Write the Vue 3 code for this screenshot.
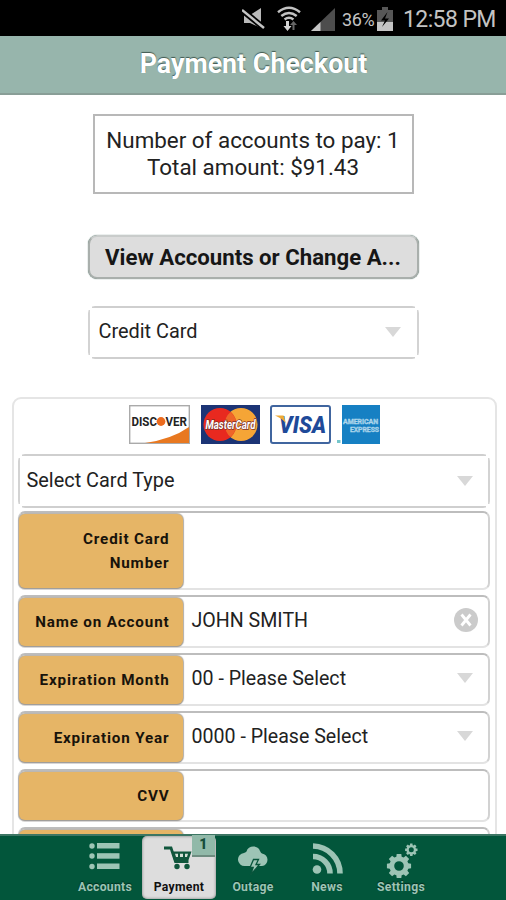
<script setup>
const fields = [
  { label: 'Credit Card Number', value: '', tall: true },
  { label: 'Name on Account', value: 'JOHN SMITH', control: 'clear' },
  { label: 'Expiration Month', value: '00 - Please Select', control: 'arrow' },
  { label: 'Expiration Year', value: '0000 - Please Select', control: 'arrow' },
  { label: 'CVV', value: '' },
  { label: '', value: '' },
]

// Closed outline of a toothed wheel centred on (cx, cy), with a round hole.
function gear(cx, cy, outer, inner, hole) {
  const pts = []
  for (let i = 0; i < 8; i++) {
    const base = (i * Math.PI) / 4
    for (const [offset, r] of [[-0.28, inner], [-0.19, outer], [0.19, outer], [0.28, inner]]) {
      pts.push(`${(cx + r * Math.cos(base + offset)).toFixed(2)} ${(cy + r * Math.sin(base + offset)).toFixed(2)}`)
    }
  }
  return `M${pts.join('L')}ZM${cx - hole} ${cy}a${hole} ${hole} 0 1 0 ${hole * 2} 0a${hole} ${hole} 0 1 0 ${-hole * 2} 0Z`
}
const bigGear = gear(15, 24, 12.3, 9.6, 4.8)
const smallGear = gear(27.3, 7.8, 6.3, 4.8, 2.5)
</script>

<template>
  <div class="screen">
    <div class="status">
      <svg class="mute" viewBox="0 0 24 22" width="24" height="22">
        <path d="M2 7h6l11-7v20L8 15H2z" fill="#b9b9b9" />
        <path d="M0 2l22 18" stroke="#000" stroke-width="6" />
        <path d="M0 2l22 18" stroke="#c4c4c4" stroke-width="2.500" />
      </svg>
      <svg class="wifi" viewBox="0 0 24 26" width="24" height="26">
        <g fill="none" stroke="#c2c2c2" stroke-width="2.500">
          <path d="M1 6.200q11-9 22 0M4.300 10q7.700-6 15.400 0M7.600 13.500q4.400-3.500 8.800 0" />
        </g>
        <path d="M9 15h3v5h2.500l-4 5-4-5H9z" fill="#d5d5d5" />
        <path d="M15.500 24v-5H13l3.500-4 3.500 4h-2.500v5z" fill="#666" />
      </svg>
      <svg class="signal" viewBox="0 0 24 23" width="24" height="23">
        <path d="M0 23L24 0v23z" fill="#4d4d4d" />
        <path d="M0 23l9.500-9v9z" fill="#c6c6c6" />
      </svg>
      <span class="percent">36%</span>
      <svg class="battery" viewBox="0 0 16 24" width="16" height="24">
        <path d="M5 0h6v3h5v21H0V3h5z" fill="#575757" />
        <path d="M0 15h16v9H0z" fill="#c4c4c4" />
        <path d="M10.500 5L4 13.500h4L5 20l7-8.500H8z" fill="#000" />
      </svg>
      <span class="clock">12:58 PM</span>
    </div>
    <header class="title"><span>Payment Checkout</span></header>

    <main class="content">
      <div class="summary">
        <div class="count">Number of accounts to pay: 1</div>
        <div class="total">Total amount: $91.43</div>
      </div>
      <button class="view"><span>View Accounts or Change A...</span></button>
      <div class="select method"><span>Credit Card</span><i class="arrow"></i></div>

      <section class="panel">
        <div class="cards">
          <svg class="discover" viewBox="0 0 61 39" width="61" height="39">
            <rect x=".7" y=".7" width="59.600" height="37.600" fill="#fff" stroke="#aaa" stroke-width="1.400" />
            <path d="M16 38Q43 34 60 22v16z" fill="#e87820" />
            <text x="2.500" y="21" textLength="25.500" lengthAdjust="spacingAndGlyphs">DISC</text>
            <circle cx="32" cy="16.500" r="4.400" fill="#ec6b1e" />
            <text x="36.500" y="21" textLength="21.500" lengthAdjust="spacingAndGlyphs">VER</text>
          </svg>
          <svg class="mastercard" viewBox="0 0 59 39" width="59" height="39">
            <rect width="59" height="39" fill="#1c3475" />
            <circle cx="40" cy="19.500" r="16.500" fill="#f5a536" />
            <circle cx="19" cy="19.500" r="16.500" fill="#e8291f" />
            <path d="M29.500 7a16.500 16.500 0 0 1 0 25a16.500 16.500 0 0 1 0-25z" fill="#ee6528" />
            <text x="4.500" y="24" textLength="50" lengthAdjust="spacingAndGlyphs">MasterCard</text>
          </svg>
          <svg class="visa" viewBox="0 0 61 39" width="61" height="39">
            <rect x="1" y="1" width="59" height="37" rx="2" fill="#fff" stroke="#40659f" stroke-width="2" />
            <text x="9" y="27.500" textLength="47" lengthAdjust="spacingAndGlyphs">VISA</text>
            <path d="M5 10.500h8.500l2.500 8q-3.500-5-11-8z" fill="#eeaa36" />
          </svg>
          <svg class="amex" viewBox="0 0 44 39" width="44" height="39">
            <rect x="6" width="38" height="39" fill="#1680c3" />
            <rect x="1" y="35" width="3.500" height="3" fill="#75c6cb" />
            <text x="7" y="18.500" textLength="35" lengthAdjust="spacingAndGlyphs">AMERICAN</text>
            <text x="14" y="27" textLength="29" lengthAdjust="spacingAndGlyphs">EXPRESS</text>
          </svg>
        </div>
        <div class="select type"><span>Select Card Type</span><i class="arrow"></i></div>
        <div v-for="(f, i) in fields" :key="i" class="field" :class="{ tall: f.tall }">
          <label>{{ f.label }}</label>
          <div class="value">
            <span>{{ f.value }}</span>
            <i v-if="f.control === 'arrow'" class="arrow"></i>
            <svg v-if="f.control === 'clear'" class="clear" viewBox="0 0 24 24" width="24" height="24">
              <circle cx="12" cy="12" r="12" fill="#cbcbcb" />
              <path d="M7.500 6.500l9 11M16.500 6.500l-9 11" stroke="#fff" stroke-width="2.800" />
            </svg>
          </div>
        </div>
      </section>
    </main>

    <nav class="tabs">
      <div class="tab">
        <svg viewBox="0 0 32 28" width="32" height="28" fill="#9dc4b5">
          <circle cx="3" cy="4" r="2.700" /><rect x="8" y="1" width="22.500" height="5.500" />
          <circle cx="3" cy="14" r="2.700" /><rect x="8" y="11.200" width="22.500" height="5.500" />
          <circle cx="3" cy="24.500" r="2.700" /><rect x="8" y="21.500" width="22.500" height="5.500" />
        </svg>
        <span>Accounts</span>
      </div>
      <div class="tab active">
        <svg viewBox="0 0 30 25" width="30" height="25">
          <path d="M1 3h7l4.500 13.500h13" fill="none" stroke="#10563c" stroke-width="2.800" />
          <path d="M8.500 6.500h20l-3 8.500H11z" fill="#10563c" />
          <path d="M12 8.800h3v3.200h-2zM17 8.800h3V12h-3zM22 8.800h3l-1 3.200h-2z" fill="#d3dfd5" />
          <circle cx="14" cy="21.500" r="2.700" fill="#10563c" /><circle cx="24" cy="21.500" r="2.700" fill="#10563c" />
        </svg>
        <span>Payment</span>
        <b class="badge">1</b>
      </div>
      <div class="tab">
        <svg class="storm" viewBox="0 0 30 29" width="30" height="29">
          <path d="M7 20a6.500 6.500 0 0 1-1-13Q8 6 8.500 5.500C10-1 20-1 22 5q1 2 2 2.500a6.300 6.300 0 0 1 0 12.500z" fill="#9dc4b5" />
          <path d="M15.500 13.500h5l-2.500 5h3.500L12.500 29l2.700-7.500H12z" fill="#9dc4b5" stroke="#08543b" stroke-width="1.300" />
        </svg>
        <span>Outage</span>
      </div>
      <div class="tab">
        <svg viewBox="0 0 31 32" width="31" height="32">
          <circle cx="5" cy="27.500" r="4.300" fill="#9dc4b5" />
          <path d="M1 14.500a17 17 0 0 1 17 17M1 4a27.500 27.500 0 0 1 27 27.500" fill="none" stroke="#9dc4b5" stroke-width="5.600" />
        </svg>
        <span>News</span>
      </div>
      <div class="tab">
        <svg viewBox="0 0 34 37" width="34" height="37" fill="#9dc4b5" fill-rule="evenodd">
          <path :d="bigGear" /><path :d="smallGear" />
        </svg>
        <span>Settings</span>
      </div>
    </nav>
  </div>
</template>

<style>
body { margin: 0; background: #fff; }
</style>

<style scoped>
* { box-sizing: border-box; }
.screen { width: 506px; height: 900px; display: flex; flex-direction: column; overflow: hidden; font-family: Roboto, sans-serif; color: #222; white-space: nowrap; }
.status { height: 36px; flex: none; background: #000; color: #c3c3c3; display: flex; align-items: center; justify-content: flex-end; padding: 2px 11px 0 0; }
.mute { margin-right: 11px; }
.wifi { margin-right: 10px; }
.signal { margin-right: 7px; }
.percent { font-size: 18px; width: 35px; letter-spacing: -.4px; }
.battery { margin-right: 10px; }
.clock { font-size: 23px; width: 92px; letter-spacing: -.6px; padding-top: 1px; }
.title { height: 59px; flex: none; background: #97b5ac; border-bottom: 2px solid #899e97; display: flex; justify-content: center; padding: 12px 0 0 1px; color: #fff; font-size: 26.800px; line-height: 32px; font-weight: 700; text-shadow: 0 -1px 1px #405850; }
.content { flex: 1; min-height: 0; overflow: hidden; display: flex; flex-direction: column; align-items: center; }
.summary { flex: none; width: 321px; height: 80px; margin-top: 19px; border: 2px solid #b8b8b8; padding-top: 11px; text-align: center; font-size: 22.400px; line-height: 27px; }
.view { flex: none; width: 331px; height: 44px; margin-top: 41px; padding: 0; border: 2px solid #a9afac; border-top-color: #c9cccb; border-radius: 9px; background: #ddd; box-shadow: 0 0 1px #386053; font: 700 22.200px/38px Roboto, sans-serif; color: #161616; }
.select { flex: none; border-radius: 7px; display: flex; align-items: center; justify-content: space-between; font-size: 19.900px;
  background:
    linear-gradient(#cfcfcf, #cfcfcf) 50% 0 / calc(100% - 8px) 2px no-repeat,
    linear-gradient(#cfcfcf, #cfcfcf) 50% 100% / calc(100% - 8px) 2px no-repeat,
    linear-gradient(#d3d3d3, #d3d3d3) 0 50% / 2px calc(100% - 8px) no-repeat,
    linear-gradient(#d3d3d3, #d3d3d3) 100% 50% / 2px calc(100% - 8px) no-repeat, #fff; }
.method { width: 331px; height: 53px; margin-top: 27px; padding: 0 18px 2px 11px; }
.arrow { width: 0; height: 0; border: 8px solid transparent; border-top: 10px solid #d8d8d8; border-bottom: 0; }
.panel { flex: none; width: 485px; margin: 38px 0 0 2px; border: 2px solid #e5e5e5; border-radius: 9px; padding: 6px 5px 6px 4px; }
.cards { display: flex; height: 39px; margin: 0 0 10px 111px; }
.cards svg { overflow: visible; }
.discover { margin-right: 11px; }
.mastercard { margin-right: 10px; }
.visa { margin-right: 5px; }
.discover text { font: 700 12px Roboto, sans-serif; fill: #222; }
.mastercard text { font: italic 700 12.500px Roboto, sans-serif; fill: #fff; stroke: #7d3027; stroke-width: 1.500px; paint-order: stroke; }
.visa text { font: italic 900 24px Roboto, sans-serif; fill: #1e4a99; }
.amex text { font: 700 6.800px Roboto, sans-serif; fill: #8fc6e4; stroke: #b4d9ec; stroke-width: .4px; }
.type { height: 54px; margin-bottom: 3px; padding: 0 17px 1px 9px; }
.field { height: 53px; margin-bottom: 5px; border: 2px solid #d2d2d2; border-top-color: #bdbdbd; border-bottom-color: #e3e3e3; border-radius: 7px; display: flex; }
.field.tall { height: 79px; }
.field label { width: 164px; margin: 1px 0 0 -1px; border-radius: 6px; background: #e6b566; box-shadow: 0 1px 1px #9f9c98, 0 0 1px 1px #b5b0a8; display: flex; align-items: center; justify-content: flex-end; text-align: right; padding: 0 13px 0 30px; font-size: 15.200px; line-height: 24px; font-weight: 700; letter-spacing: .85px; color: #18130b; }
.field.tall label { white-space: normal; padding-left: 60px; }
.value { flex: 1; display: flex; align-items: center; justify-content: space-between; padding: 0 15px 3px 9px; font-size: 19.600px; }
.clear { margin-right: -5px; }
.tabs { position: relative; height: 66px; flex: none; background: #02563b; border-top: 2px solid #3d7664; display: flex; justify-content: center; }
.tab { position: relative; width: 74px; height: 64px; display: flex; flex-direction: column; align-items: center; justify-content: space-between; padding: 6px 0 5px; color: #9dc4b5; font-size: 12.200px; line-height: 16px; font-weight: 700; letter-spacing: .3px; text-shadow: 0 -1px 1px #022b1d; }
.tab.active { background: #ddd; border-radius: 5px; color: #111; text-shadow: none; box-shadow: inset 0 0 3px #777; padding-top: 9px; height: 63px; padding-bottom: 4px; }
.storm { margin-top: 4px; }
.tab.active svg { margin-left: -2px; }
.badge { position: absolute; right: 1px; top: -1px; width: 23px; height: 22px; background: #91b9a9; border-bottom: 2px solid #6e8c80; text-align: center; font-size: 14px; line-height: 18px; color: #164c39; }
</style>
